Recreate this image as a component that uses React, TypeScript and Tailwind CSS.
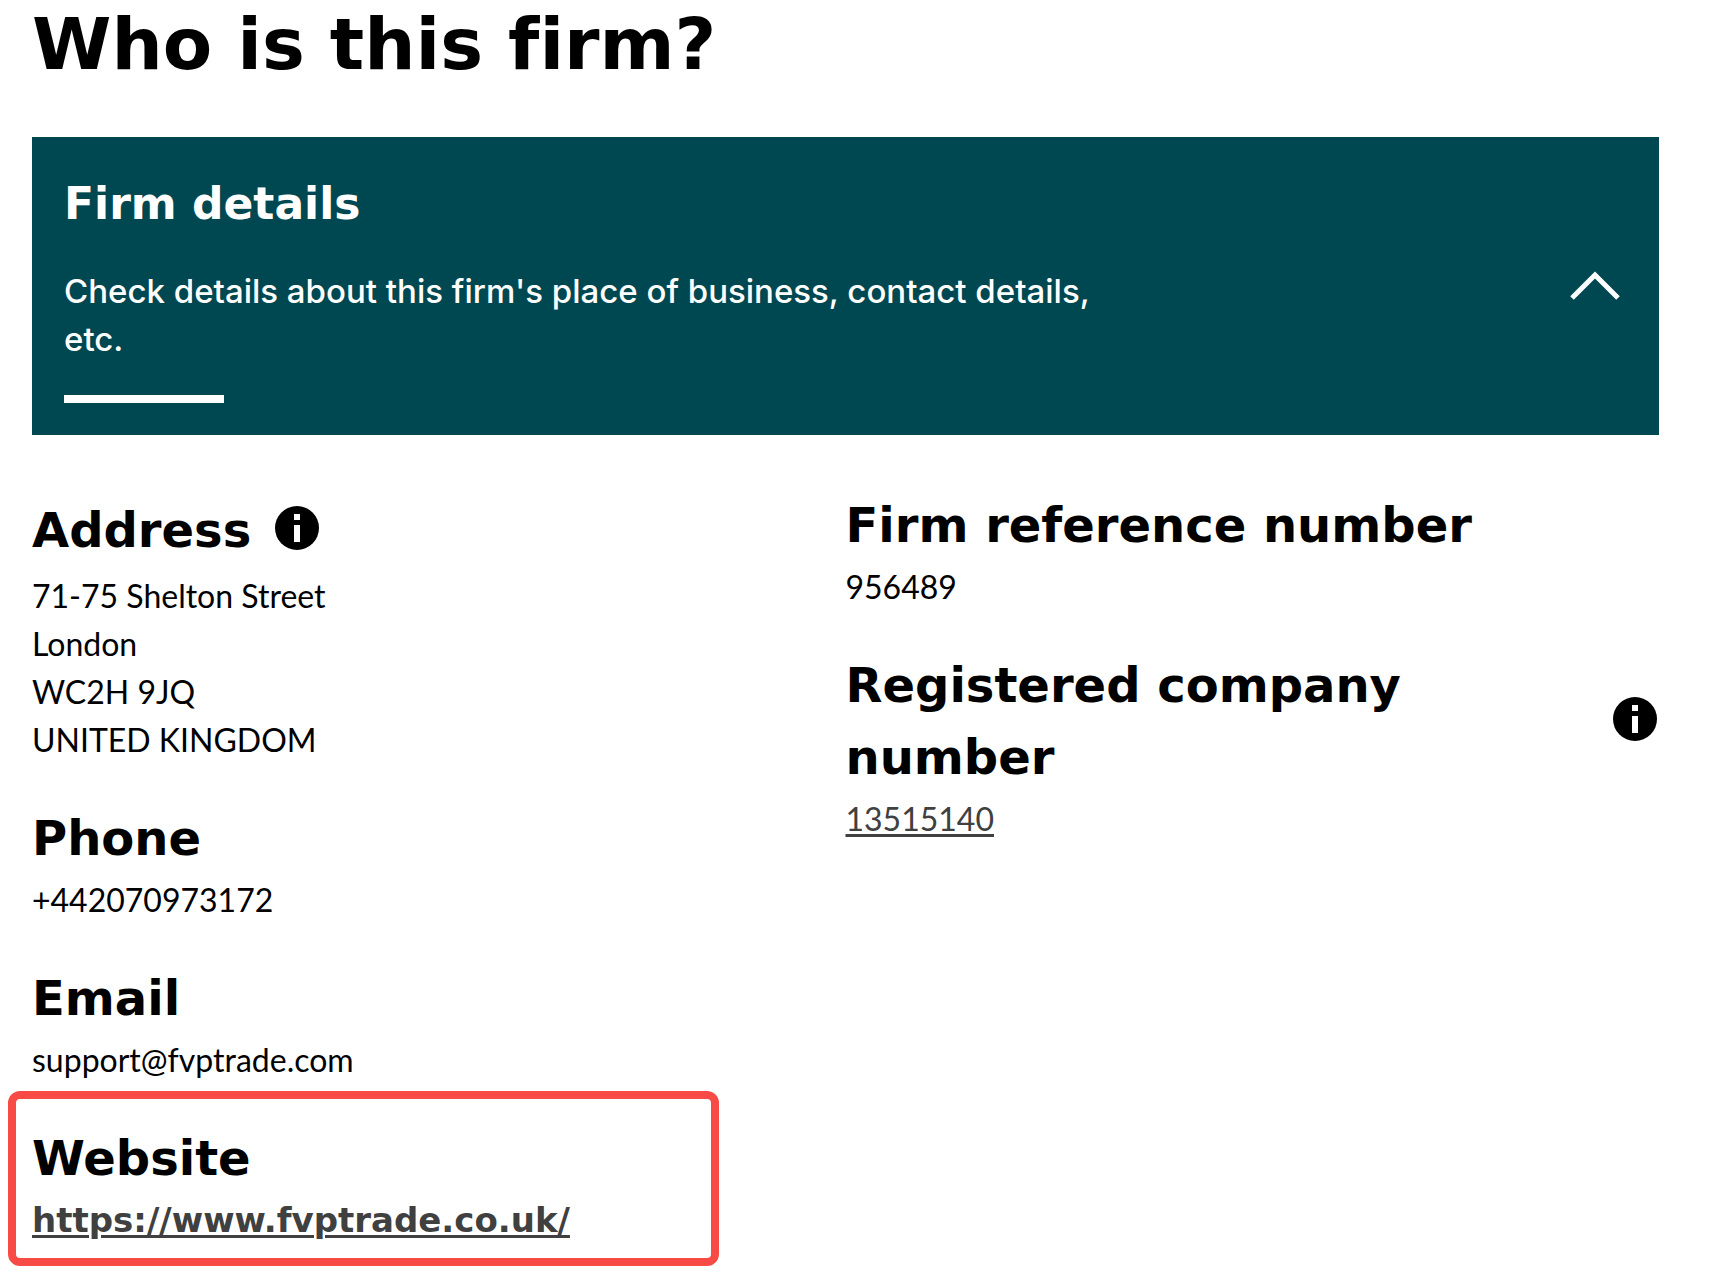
import type { ReactNode } from "react";

const headFont = "font-['DejaVu_Sans',sans-serif]";
const linkStyle = "text-[#404040] underline decoration-[3px] underline-offset-[3px]";

function InfoButton({ label }: { label: string }) {
  return (
    <button type="button" aria-label={label} className="mb-1 shrink-0">
      <svg viewBox="0 0 44 44" className="block size-11">
        <circle cx="22" cy="22" r="22" fill="#000" />
        <path d="M19 8h6v6h-6zM19 19h6v17h-6z" fill="#fff" />
      </svg>
    </button>
  );
}

function Heading({ children }: { children: ReactNode }) {
  return <h3 className={`${headFont} text-5xl leading-[72px] font-bold`}>{children}</h3>;
}

export default function App() {
  return (
    <main className="bg-white pr-[52px] pb-9 pl-8 font-['Lato',sans-serif] text-[32px] leading-12 text-black [font-variant-ligatures:none]">
      <h1 className={`${headFont} pt-1 text-7xl leading-20 font-bold`}>Who is this firm?</h1>

      <section className="mt-[53px] flex items-center justify-between bg-[#004851] py-8 pr-[38px] pl-8 text-white">
        <div className="max-w-[1060px]">
          <h2 className={`${headFont} text-[44px] leading-[70px] font-bold`}>Firm details</h2>
          <p className="mt-7 font-['Inter',sans-serif] text-[33px] font-medium">
            Check details about this firm's place of business, contact details, etc.
          </p>
          <div className="mt-8 h-2 w-40 bg-white" />
        </div>
        <button type="button" aria-label="Collapse firm details" aria-expanded="true">
          <svg viewBox="0 0 52 30" className="block h-[30px] w-[52px]" fill="none" stroke="#fff" strokeWidth="5">
            <path d="M3 27 26 4 49 27" />
          </svg>
        </button>
      </section>

      <div className="mt-[54px] grid grid-cols-2">
        <div className="flex flex-col gap-[38px]">
          <div>
            <div className="flex min-h-[81px] items-center gap-6">
              <Heading>Address</Heading>
              <InfoButton label="About address" />
            </div>
            <address className="pt-0.5 not-italic">
              71-75 Shelton Street
              <br />
              London
              <br />
              WC2H 9JQ
              <br />
              UNITED KINGDOM
            </address>
          </div>
          <div>
            <Heading>Phone</Heading>
            <p className="pt-0.5">+442070973172</p>
          </div>
          <div>
            <Heading>Email</Heading>
            <p className="pt-0.5">support@fvptrade.com</p>
          </div>
          <div className="relative">
            <div className="pointer-events-none absolute -top-[31px] -bottom-[22px] -left-6 w-[711px] rounded-xl border-8 border-[#f94b46]" />
            <Heading>Website</Heading>
            <p className="pt-0.5">
              <a href="https://www.fvptrade.co.uk/" className={`${headFont} ${linkStyle} text-[34px] font-bold`}>
                https://www.fvptrade.co.uk/
              </a>
            </p>
          </div>
        </div>

        <div className="flex flex-col gap-[38px]">
          <div>
            <Heading>Firm reference number</Heading>
            <p className="pt-0.5">956489</p>
          </div>
          <div>
            <div className="flex items-center justify-between gap-6 pr-0.5">
              <div className="max-w-[640px]">
                <Heading>Registered company number</Heading>
              </div>
              <InfoButton label="About registered company number" />
            </div>
            <p className="pt-0.5">
              <a href="#company" className={linkStyle}>
                13515140
              </a>
            </p>
          </div>
        </div>
      </div>
    </main>
  );
}
